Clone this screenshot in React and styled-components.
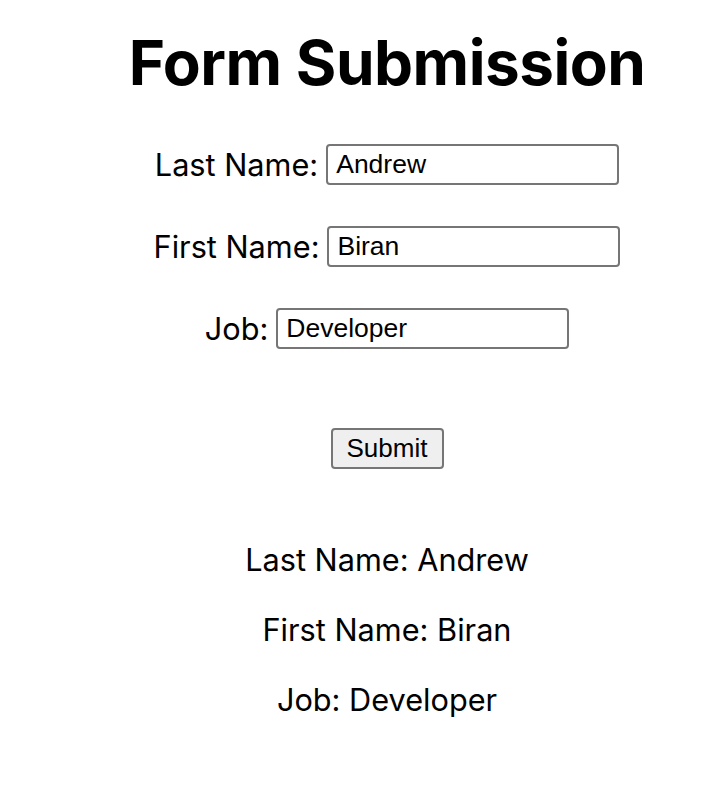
import styled, { createGlobalStyle } from "styled-components";

const GlobalStyle = createGlobalStyle`
body {
    margin: 0;
    background: #ffffff;
    color: #000000;
    font-family: Inter, "Liberation Sans", sans-serif;
}
`

const fields = [
    { label: "Last Name", value: "Andrew" },
    { label: "First Name", value: "Biran" },
    { label: "Job", value: "Developer" },
]

export default function App() {
    return (
        <Page>
            <GlobalStyle />
            <Title>Form Submission</Title>
            <Form onSubmit={(e) => e.preventDefault()}>
                {fields.map((f) => (
                    <Row key={f.label}>
                        <Label>{f.label}:</Label>
                        <Input type="text" defaultValue={f.value} />
                    </Row>
                ))}
                <Button type="submit">Submit</Button>
            </Form>
            <Results>
                {fields.map((f) => (
                    <Line key={f.label}>{f.label}: {f.value}</Line>
                ))}
            </Results>
        </Page>
    )
}

const Page = styled.div`
padding-left: 48px;
display: flex;
flex-direction: column;
align-items: center;
`
const Title = styled.h1`
margin: 26px 0 0 0;
font-family: Inter, sans-serif;
font-weight: 700;
font-size: 62px;
line-height: 1.2;
letter-spacing: -0.5px;
`
const Form = styled.form`
margin-top: 44px;
display: flex;
flex-direction: column;
align-items: center;
gap: 41px;
`
const Row = styled.div`
display: flex;
align-items: center;
gap: 8px;
height: 41px;
`
const Label = styled.label`
font-family: Inter, sans-serif;
font-size: 30.7px;
`
const Input = styled.input`
box-sizing: border-box;
width: 293px;
height: 41px;
padding: 0 8px;
border: 2px solid #767676;
border-radius: 4px;
font-family: "Liberation Sans", Arial, sans-serif;
font-size: 26.5px;
color: #000000;
`
const Button = styled.button`
margin-top: 38px;
box-sizing: border-box;
width: 113px;
height: 41px;
border: 2px solid #767676;
border-radius: 4px;
background: #efefef;
font-family: "Liberation Sans", Arial, sans-serif;
font-size: 26px;
color: #000000;
`
const Results = styled.div`
margin-top: 72px;
display: flex;
flex-direction: column;
align-items: center;
gap: 32px;
`
const Line = styled.p`
margin: 0;
font-family: Inter, sans-serif;
font-size: 30.7px;
line-height: 38px;
`
